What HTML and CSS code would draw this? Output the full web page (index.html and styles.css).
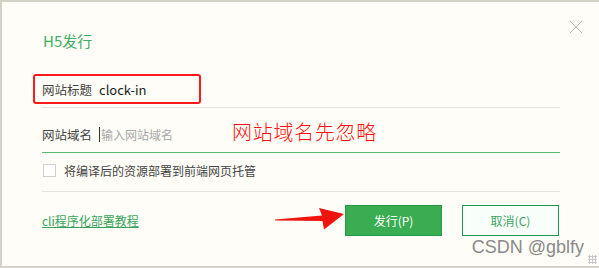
FILE: index.html
```html
<!DOCTYPE html>
<html lang="zh-CN">
<head>
    <meta charset="UTF-8">
    <title>H5发行</title>
    <link rel="stylesheet" href="styles.css">
</head>
<body>
    <div class="dialog">
        <div class="dialog-header">
            <span class="dialog-title">H5发行</span>
            <span class="close-btn">
                <svg width="14" height="14" viewBox="0 0 14 14"><path d="M1 1L13 13M13 1L1 13" stroke="#b8b8b8" stroke-width="1" fill="none"/></svg>
            </span>
        </div>

        <div class="form-row">
            <span class="label">网站标题</span>
            <span class="value">clock-in</span>
        </div>
        <div class="form-row form-row-active">
            <span class="label">网站域名</span>
            <span class="caret"></span>
            <span class="placeholder">输入网站域名</span>
        </div>
        <div class="form-row check-row">
            <span class="checkbox"></span>
            <span class="check-label">将编译后的资源部署到前端网页托管</span>
        </div>

        <div class="dialog-footer">
            <a class="doc-link" href="#">cli程序化部署教程</a>
            <div class="buttons">
                <button class="btn btn-primary">发行(P)</button>
                <button class="btn btn-default">取消(C)</button>
            </div>
        </div>

        <!-- annotations drawn over the screenshot -->
        <div class="mark-box"></div>
        <div class="mark-text">网站域名先忽略</div>
        <svg class="mark-arrow" width="76" height="30" viewBox="0 0 76 30">
            <path d="M3 14.5L50 10.5L47 3L72 9L52 24.5L50.5 16L3 15.5Z" fill="#f0140f"/>
        </svg>
        <div class="watermark">CSDN @gblfy</div>
        <div class="grip"></div>
    </div>
</body>
</html>
```

FILE: styles.css
```css
html, body {
    margin: 0;
    padding: 0;
}
body {
    font-family: "Noto Sans CJK SC", "Microsoft YaHei", sans-serif;
    font-size: 12px;
    color: #333;
    background: #fefdf8;
}
.dialog {
    position: relative;
    box-sizing: border-box;
    width: 599px;
    height: 268px;
    border-top: 2px solid #d4d2c6;
    border-left: 2px solid #d4d2c6;
    border-bottom: 2px solid #d4d2c6;
    background: #fefdf8;
}
.dialog-header {
    display: flex;
    justify-content: space-between;
    align-items: flex-start;
    height: 69px;
    box-sizing: border-box;
    padding: 29px 16px 0 41px;
}
.dialog-title {
    font-size: 15px;
    line-height: 20px;
    color: #3fae62;
}
.close-btn {
    margin-top: -11px;
    width: 14px;
    height: 14px;
}
.close-btn svg {
    display: block;
}
.form-row {
    display: flex;
    align-items: center;
    margin-left: 40px;
    width: 518px;
    height: 36px;
    border-bottom: 1px solid #e3e3e0;
}
.form-row-active {
    height: 45px;
    box-sizing: border-box;
    padding-top: 8px;
    border-bottom-color: #5cb872;
}
.label {
    font-size: 12.5px;
    color: #444;
    margin-right: 7px;
}
.value {
    font-size: 13px;
    color: #222;
}
.caret {
    width: 1px;
    height: 15px;
    background: #333;
    margin-right: 1px;
}
.placeholder {
    color: #a8a8a8;
}
.check-row {
    height: 39px;
    box-sizing: border-box;
    padding-bottom: 3px;
    padding-left: 1px;
}
.checkbox {
    width: 11px;
    height: 11px;
    border: 1px solid #cfcfcf;
    background: #fff;
    margin-right: 8px;
}
.check-label {
    color: #444;
}
.dialog-footer {
    display: flex;
    justify-content: space-between;
    align-items: center;
    margin-left: 40px;
    width: 518px;
    margin-top: 13px;
}
.doc-link {
    color: #37a35a;
    text-decoration: underline;
}
.buttons {
    display: flex;
    gap: 20px;
    margin-right: 1px;
}
.btn {
    width: 97px;
    height: 31px;
    box-sizing: border-box;
    font-family: inherit;
    font-size: 12px;
    cursor: pointer;
}
.btn-primary {
    background: #3aac52;
    border: 1px solid #1f9a45;
    color: #fff;
}
.btn-default {
    background: #f8fffa;
    border: 1px solid #1e9a4e;
    color: #3ea25f;
}
.mark-box {
    position: absolute;
    left: 31px;
    top: 72px;
    width: 164px;
    height: 26px;
    border: 2px solid #ff1a1a;
    border-radius: 3px;
}
.mark-text {
    position: absolute;
    left: 230px;
    top: 116px;
    font-size: 20px;
    font-weight: 300;
    line-height: 28px;
    letter-spacing: 0.7px;
    color: #ff1010;
}
.mark-arrow {
    position: absolute;
    left: 270px;
    top: 203px;
}
.watermark {
    position: absolute;
    right: 15px;
    top: 235px;
    font-family: "Liberation Sans", Arial, sans-serif;
    font-size: 18px;
    color: #8a8a8a;
}
.grip {
    position: absolute;
    right: 2px;
    bottom: 2px;
    width: 9px;
    height: 9px;
    background-image: radial-gradient(circle, #c8c8c8 1px, transparent 1.2px);
    background-size: 3px 3px;
}
```
